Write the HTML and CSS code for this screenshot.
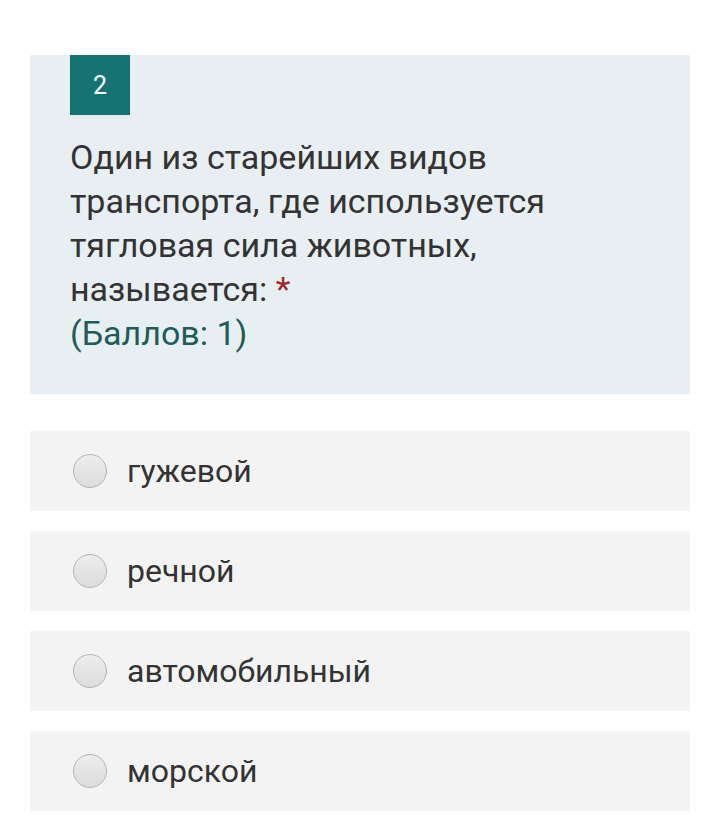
FILE: index.html
```html
<!DOCTYPE html>
<html lang="ru">
<head>
<meta charset="utf-8">
<link rel="stylesheet" href="styles.css">
</head>
<body>
<div class="page">
  <div class="question">
    <div class="badge">2</div>
    <div class="qtext">Один из старейших видов транспорта, где используется тягловая сила животных, называется: <span class="req">*</span><br><span class="points">(Баллов: 1)</span></div>
  </div>
  <div class="options">
    <label class="option"><span class="radio"></span><span class="otext">гужевой</span></label>
    <label class="option"><span class="radio"></span><span class="otext">речной</span></label>
    <label class="option"><span class="radio"></span><span class="otext">автомобильный</span></label>
    <label class="option"><span class="radio"></span><span class="otext">морской</span></label>
  </div>
</div>
</body>
</html>
```
FILE: styles.css
```css
html, body { margin: 0; padding: 0; background: #fff; }
body { font-family: Roboto, "Noto Sans", sans-serif; color: #333; }
.page { padding: 55px 20px 0 30px; width: 660px; }
.question { background: #e8eff2; padding: 0 40px 39px; }
.badge { width: 60px; height: 60px; background: #157373; color: #fff; font-size: 25px; display: flex; align-items: center; justify-content: center; }
.qtext { margin-top: 20px; font-size: 34px; line-height: 44px; color: #333; }
.req { color: #a4262c; }
.points { color: #1d5c57; }
.options { display: flex; flex-direction: column; gap: 20px; margin-top: 37px; }
.option { height: 80px; background: #f3f3f3; display: flex; align-items: center; padding-left: 43px; }
.radio { flex: none; width: 34px; height: 34px; border-radius: 50%; box-sizing: border-box; border: 1px solid #b5b5b5; background: linear-gradient(#ededed, #dcdcdc); }
.otext { margin-left: 20px; font-size: 32px; color: #333; }
```
